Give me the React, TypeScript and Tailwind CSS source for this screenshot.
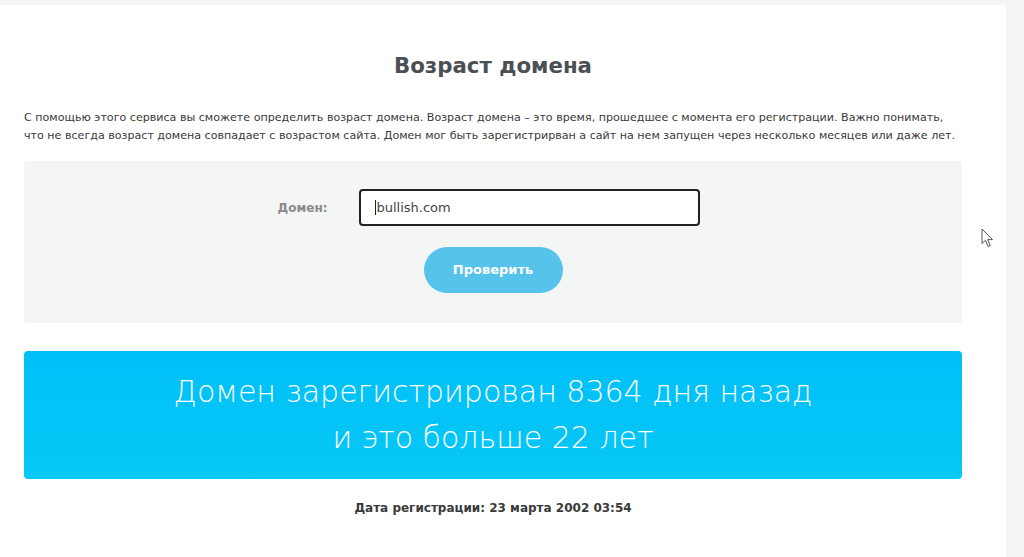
import React from 'react';

const font = { fontFamily: '"DejaVu Sans", "Open Sans", sans-serif' };

const Cursor: React.FC = () => (
  <svg className="absolute left-[981px] top-[228px]" width="13" height="20" viewBox="0 0 13 20">
    <path
      d="M1 1 L1 15.5 L4.5 12.3 L7.2 18.5 L9.3 17.6 L6.7 11.6 L11.5 11.6 Z"
      fill="#ffffff"
      stroke="#555"
      strokeWidth="1"
      strokeLinejoin="round"
    />
  </svg>
);

const App: React.FC = () => {
  return (
    <div className="relative flex h-[557px] w-[1024px] overflow-hidden bg-[#f4f5f6]" style={font}>
      <div className="mt-[5px] flex w-[1006px] flex-col items-center bg-white pl-6 pr-[44px]">
        <h1 className="mt-[46px] text-[21.3px] font-bold leading-[30px] text-[#4b4f54]">Возраст домена</h1>

        <p className="mt-[28px] w-full whitespace-nowrap text-[11.1px] leading-[18px] text-[#3a3a3a]">
          С помощью этого сервиса вы сможете определить возраст домена. Возраст домена – это время, прошедшее с момента его регистрации. Важно понимать,
          <br />
          что не всегда возраст домена совпадает с возрастом сайта. Домен мог быть зарегистрирван а сайт на нем запущен через несколько месяцев или даже лет.
        </p>

        <div className="mt-[16px] flex h-[162px] w-full flex-col items-center rounded-[3px] bg-[#f4f5f5] pt-[28px]">
          <div className="ml-[-8px] flex items-center">
            <label className="mr-[32px] text-[12px] font-semibold text-[#8a8a8a]">Домен:</label>
            <div className="flex h-[37px] w-[341px] items-center rounded-[4px] border-2 border-[#222] bg-white px-[14px] text-[13px] text-[#444]">
              <span className="h-[15px] w-px bg-[#222]" />
              bullish.com
            </div>
          </div>
          <button className="mt-[21px] h-[46px] w-[139px] rounded-full bg-[#56c3ea] text-[13px] font-bold text-white">
            Проверить
          </button>
        </div>

        <div className="mt-[28px] flex h-[128px] w-full flex-col items-center justify-center rounded-[4px] bg-gradient-to-b from-[#00bff8] to-[#08c8f6] text-[30px] font-extralight leading-[46px] text-white">
          <div>Домен зарегистрирован 8364 дня назад</div>
          <div>и это больше 22 лет</div>
        </div>

        <div className="mt-[20px] text-[12px] font-bold text-[#3a3a3a]">Дата регистрации: 23 марта 2002 03:54</div>
      </div>
      <Cursor />
    </div>
  );
};

export default App;
